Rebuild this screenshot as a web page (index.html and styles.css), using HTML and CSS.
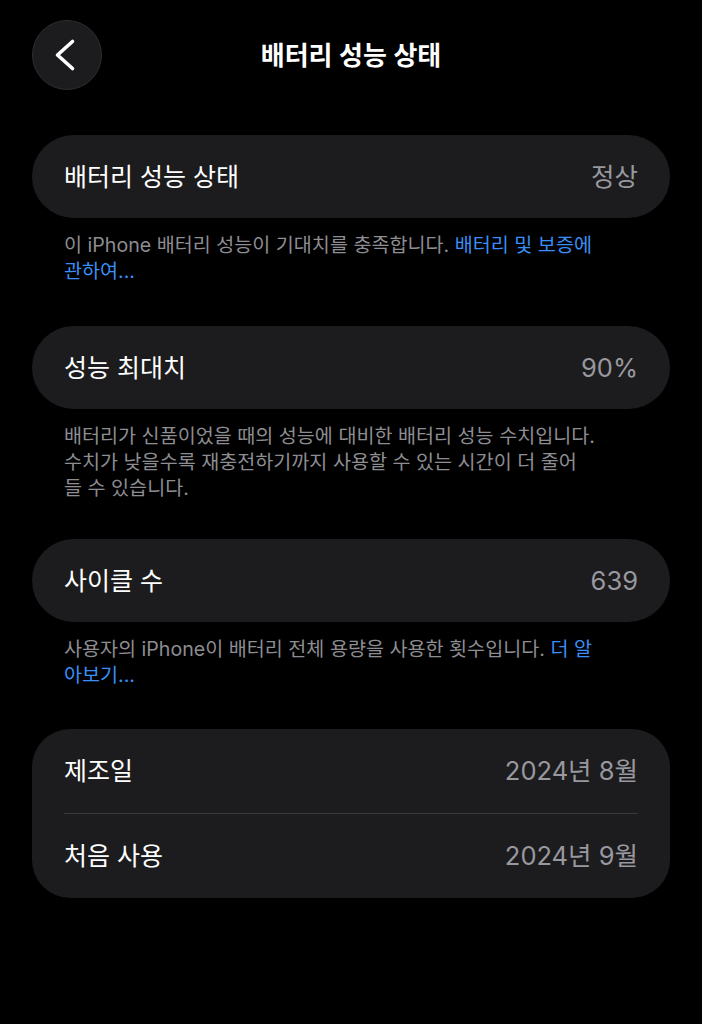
FILE: index.html
```html
<!DOCTYPE html>
<html lang="ko">
<head>
<meta charset="utf-8">
<title>배터리 성능 상태</title>
<link rel="stylesheet" href="styles.css">
</head>
<body>
<div class="screen">
  <header class="header">
    <button class="back" aria-label="뒤로">
      <svg width="70" height="70" viewBox="0 0 70 70"><path d="M40.5 21.5 L25.5 35 L40.5 48.5" fill="none" stroke="#fff" stroke-width="3.6" stroke-linecap="round" stroke-linejoin="round"/></svg>
    </button>
    <h1 class="title">배터리 성능 상태</h1>
    <div class="spacer"></div>
  </header>

  <section class="group g1">
    <div class="row"><span class="label">배터리 성능 상태</span><span class="value">정상</span></div>
  </section>
  <p class="footer">이 iPhone 배터리 성능이 기대치를 충족합니다. <span class="link">배터리 및 보증에<br>관하여...</span></p>

  <section class="group g2">
    <div class="row"><span class="label">성능 최대치</span><span class="value">90%</span></div>
  </section>
  <p class="footer">배터리가 신품이었을 때의 성능에 대비한 배터리 성능 수치입니다.<br>수치가 낮을수록 재충전하기까지 사용할 수 있는 시간이 더 줄어<br>들 수 있습니다.</p>

  <section class="group g3">
    <div class="row"><span class="label">사이클 수</span><span class="value">639</span></div>
  </section>
  <p class="footer">사용자의 iPhone이 배터리 전체 용량을 사용한 횟수입니다. <span class="link">더 알<br>아보기...</span></p>

  <section class="group g4 multi">
    <div class="row"><span class="label">제조일</span><span class="value">2024년 8월</span></div>
    <div class="divider"></div>
    <div class="row"><span class="label">처음 사용</span><span class="value">2024년 9월</span></div>
  </section>
</div>
</body>
</html>
```

FILE: styles.css
```css
html, body {
  margin: 0;
  padding: 0;
  background: #000;
}
body {
  font-family: "Inter", "Noto Sans CJK KR", sans-serif;
  color: #fff;
  width: 702px;
  min-height: 1024px;
}
.screen {
  display: flex;
  flex-direction: column;
  padding-top: 20px;
}
.header {
  display: grid;
  grid-template-columns: 70px 1fr 70px;
  align-items: center;
  padding: 0 32px;
  height: 70px;
}
.back {
  width: 70px;
  height: 70px;
  border-radius: 50%;
  background: #1c1c1e;
  border: 1px solid #2e2e30;
  box-sizing: border-box;
  padding: 0;
  display: flex;
  align-items: center;
  justify-content: center;
}
.back svg { display: block; margin: -1px; }
.title {
  margin: 2px 0 0;
  text-align: center;
  font-size: 26px;
  font-weight: 600;
  line-height: 30px;
}
.group {
  margin: 40px 32px 0;
  background: #1c1c1e;
  border-radius: 42px;
}
.group.g1 { margin-top: 45px; }
.group.g2 { margin-top: 42px; }
.group.g3 { margin-top: 38px; }
.group.g4 { margin-top: 41px; }
.group.multi { border-radius: 38px; }
.row {
  height: 83px;
  padding: 0 32px;
  display: flex;
  align-items: center;
  justify-content: space-between;
}
.multi .row { height: 84px; }
.label {
  font-size: 25px;
  line-height: 30px;
  color: #fff;
}
.value {
  font-size: 25.5px;
  line-height: 30px;
  color: #98989e;
}
.divider {
  height: 1px;
  background: #39393c;
  margin: 0 32px;
}
.footer {
  margin: 14px 0 0;
  padding: 0 64px;
  font-size: 19.6px;
  line-height: 26px;
  color: #8d8d92;
  white-space: nowrap;
}
.link {
  color: #3a8ef5;
}
```
